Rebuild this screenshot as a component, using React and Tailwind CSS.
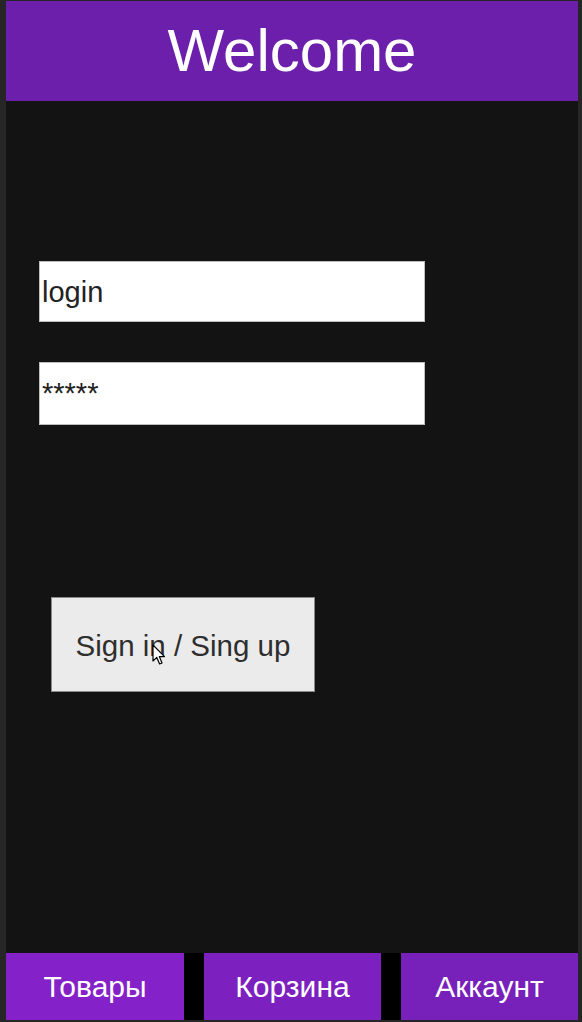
export default function App() {
  const font = { fontFamily: '"Liberation Sans", Arial, sans-serif' };
  return (
    <div
      className="w-[582px] h-[1022px] bg-[#262626] flex flex-col pl-[6px] pr-[4px] pt-[1px] pb-[2px] overflow-hidden"
      style={font}
    >
      <header className="h-[100px] shrink-0 bg-[#6b1fab] flex items-center justify-center">
        <h1 className="text-[60px] leading-none text-white font-normal">Welcome</h1>
      </header>
      <main className="flex-1 bg-[#131313] flex flex-col pt-[160px] pl-[33px]">
        <div className="w-[386px] h-[61px] bg-white border border-[#bdbdbd] pt-[16px] pl-[2px]">
          <span className="text-[29px] leading-[29px] text-[#222] block">login</span>
        </div>
        <div className="w-[386px] h-[63px] bg-white border border-[#bdbdbd] mt-[40px] pt-[16px] pl-[2px]">
          <span className="text-[29px] leading-[29px] text-[#222] block">*****</span>
        </div>
        <div className="relative ml-[12px] mt-[172px] w-[264px] h-[95px] bg-[#ebebeb] border border-[#8a8a8a] flex items-center justify-center pt-[3px]">
          <span className="text-[29.5px] leading-none text-[#2e2e2e]">Sign in / Sing up</span>
          <svg
            className="absolute left-[100px] top-[46px]"
            width="14"
            height="22"
            viewBox="0 0 14 22"
          >
            <path
              d="M1 1 L1 17 L4.8 13.4 L7.6 20 L10 19 L7.3 12.6 L12.5 12.6 Z"
              fill="#ffffff"
              stroke="#000000"
              strokeWidth="1.2"
              strokeLinejoin="round"
            />
          </svg>
        </div>
      </main>
      <nav className="h-[67px] shrink-0 flex gap-[20px] bg-black">
        <button className="w-[178px] bg-[#8421c8] text-white text-[30px] leading-none">Товары</button>
        <button className="w-[177px] bg-[#7c21bf] text-white text-[30px] leading-none">Корзина</button>
        <button className="flex-1 bg-[#7720ba] text-white text-[30px] leading-none">Аккаунт</button>
      </nav>
    </div>
  );
}
